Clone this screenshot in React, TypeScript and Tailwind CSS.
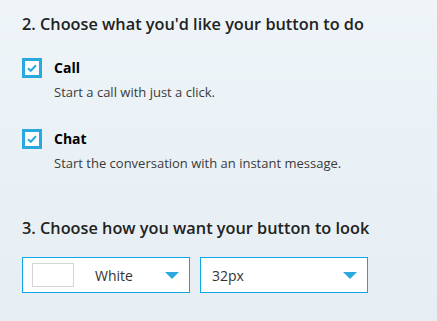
function Check() {
  return (
    <div className="flex h-5 w-5 shrink-0 items-center justify-center border-[3px] border-[#2aa9e0] bg-white">
      <svg width="10" height="8" viewBox="0 0 10 8" fill="none">
        <path d="M1 4.2 L3.8 6.8 L9 1.2" stroke="#2aa9e0" strokeWidth="2" />
      </svg>
    </div>
  )
}

function Option({ title, text }: { title: string; text: string }) {
  return (
    <div className="flex gap-3">
      <Check />
      <div className="flex flex-col">
        <strong className="text-[14px] font-bold leading-5 text-black">{title}</strong>
        <span className="mt-[4px] text-[13px] leading-5 text-[#3a3a3a]">{text}</span>
      </div>
    </div>
  )
}

function Arrow() {
  return (
    <svg width="14" height="7" viewBox="0 0 14 7">
      <path d="M0 0 H14 L7 7 Z" fill="#2aa9e0" />
    </svg>
  )
}

export default function App() {
  const options = [
    { title: 'Call', text: 'Start a call with just a click.' },
    { title: 'Chat', text: 'Start the conversation with an instant message.' },
  ]
  return (
    <div className="h-[321px] w-[437px] bg-gradient-to-b from-[#eef4f8] to-[#e6eef3] px-[22px] pt-[12px] font-['Open_Sans',sans-serif]">
      <h2 className="text-[16.3px] font-semibold leading-6 text-[#222]">
        2. Choose what you'd like your button to do
      </h2>
      <div className="mt-[22px] flex flex-col gap-[27px]">
        {options.map(o => (
          <Option key={o.title} title={o.title} text={o.text} />
        ))}
      </div>
      <h2 className="mt-[43px] text-[16.3px] font-semibold leading-6 text-[#222]">
        3. Choose how you want your button to look
      </h2>
      <div className="mt-[17px] flex gap-[10px]">
        <div className="flex h-9 w-[168px] items-center border border-[#0fa7e6] bg-white pl-[9px] pr-[10px]">
          <div className="h-6 w-[42px] border border-[#d4d4d4] bg-white" />
          <span className="ml-[21px] flex-1 text-[14px] text-[#333]">White</span>
          <Arrow />
        </div>
        <div className="flex h-9 w-[168px] items-center border border-[#0fa7e6] bg-white pl-[11px] pr-[10px]">
          <span className="flex-1 text-[14px] text-[#333]">32px</span>
          <Arrow />
        </div>
      </div>
    </div>
  )
}
